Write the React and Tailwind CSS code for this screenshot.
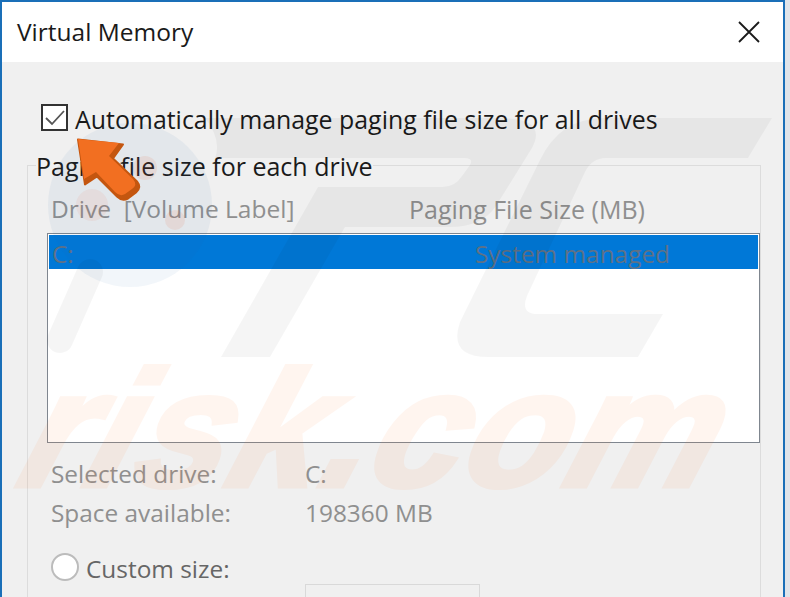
import React from "react";

const Watermark = () => (
  <div className="absolute inset-0 pointer-events-none overflow-hidden">
    <svg className="absolute left-0 top-0" width="790" height="597" viewBox="0 0 790 597" fill="none">
      {/* magnifier */}
      <circle cx="130" cy="205" r="82" fill="#2a5ea8" fillOpacity="0.06" />
      <line x1="90" y1="272" x2="60" y2="340" stroke="#000" strokeOpacity="0.04" strokeWidth="26" strokeLinecap="round" />
      <circle cx="145" cy="168" r="12" fill="#f05a28" fillOpacity="0.1" />
      <circle cx="92" cy="205" r="16" fill="#f05a28" fillOpacity="0.07" />
      <circle cx="175" cy="220" r="10" fill="#f05a28" fillOpacity="0.1" />
      {/* P */}
      <path
        fillRule="evenodd"
        fill="#000"
        fillOpacity="0.04"
        d="M205 118 L500 118 Q548 118 532 148 L496 206 Q482 227 450 227 L345 227 L270 357 L221 357 L318 187 L442 187 Q455 187 462 176 L470 165 Q474 158 464 158 L215 158 Q222 140 205 118 Z"
      />
      {/* C */}
      <path
        fill="#000"
        fillOpacity="0.04"
        d="M772 118 L748 158 L606 158 Q592 158 585 172 L527 296 Q520 314 538 314 L663 314 L638 357 L488 357 Q448 357 460 322 L540 160 Q560 118 604 118 Z"
      />
    </svg>
    <span className="absolute left-0 top-[329px] origin-bottom-left -skew-x-[18deg] font-['Liberation_Sans',sans-serif] font-bold italic text-[165px] leading-[200px] tracking-[2px] whitespace-nowrap text-[#ff7a2a] opacity-[0.07] [-webkit-text-stroke:5px_#ff7a2a]">
      risk.com
    </span>
  </div>
);

const Arrow = () => (
  <svg className="absolute left-[70px] top-[130px]" width="80" height="75" viewBox="70 130 80 75">
    <path
      d="M77 138 L122 143 L112 157 L136 180 Q141 186 135 191 L127 197 Q121 200 116 195 L96 175 L84 183 Z"
      fill="#c4560f"
      stroke="#c4560f"
      strokeWidth="2"
      strokeLinejoin="round"
      transform="translate(1 1.5)"
    />
    <path
      d="M78 139 L119 143 L109 156 L133 179 Q138 185 132 189 L125 194 Q120 197 115 192 L96 172 L84 179 Z"
      fill="#f26f21"
      strokeLinejoin="round"
    />
  </svg>
);

export default function App() {
  return (
    <div className="relative w-[790px] h-[597px] overflow-hidden bg-[#dfe4ea] font-['Open_Sans',sans-serif]">
      <div className="w-[785px] h-[597px] border-l-2 border-r-2 border-t-2 border-[#1a6fb8] bg-[#f0f0f0] flex flex-col">
        <div className="h-[60px] shrink-0 bg-white flex items-center justify-between pl-[15px] pr-[23px]">
          <span className="text-[24.5px] leading-[30px] text-[#1a1a1a]">Virtual Memory</span>
          <svg width="22" height="22" viewBox="0 0 22 22" fill="none" stroke="#1a1a1a" strokeWidth="1.8">
            <path d="M1 1 L21 21 M21 1 L1 21" />
          </svg>
        </div>

        <div className="flex-1 min-h-0">
          <div className="flex items-center gap-[7px] pl-[39px] mt-[42px] h-[27px]">
            <div className="w-[27px] h-[27px] border-2 border-[#333] bg-white flex items-center justify-center">
              <svg width="20" height="16" viewBox="0 0 20 16" fill="none" stroke="#555" strokeWidth="1.8">
                <path d="M1 8 L7 14 L19 1" />
              </svg>
            </div>
            <span className="text-[24.9px] leading-[30px] pt-[2px] text-[#1a1a1a] whitespace-nowrap">
              Automatically manage paging file size for all drives
            </span>
          </div>

          <div className="ml-[25px] mt-[34px] w-[734px] h-[500px] border border-[#dcdcdc]">
            <div className="-mt-[15px] ml-[8px] w-fit bg-[#f0f0f0] h-[30px] text-[25px] leading-[30px] text-[#1a1a1a] whitespace-nowrap">
              Paging file size for each drive
            </div>

            <div className="mt-[13px] h-[30px] flex text-[25px] leading-[30px] text-[#8f8f8f] pl-[23px]">
              <span className="w-[358px] whitespace-pre text-[24.5px]">Drive  [Volume Label]</span>
              <span>Paging File Size (MB)</span>
            </div>

            <div className="mt-[9px] ml-[19px] w-[713px] h-[210px] border border-[#7f868f] bg-white p-px">
              <div className="h-[34px] bg-[#0078d7] flex text-[24.4px] leading-[38px] text-[#5f7186] pl-[3px]">
                <span className="w-[423px]">C:</span>
                <span>System managed</span>
              </div>
            </div>

            <div className="mt-[16px] h-[30px] flex text-[24.4px] leading-[30px] text-[#8f8f8f] pl-[23px]">
              <span className="w-[254px]">Selected drive:</span>
              <span>C:</span>
            </div>
            <div className="mt-[9px] h-[30px] flex text-[24.4px] leading-[30px] text-[#8f8f8f] pl-[23px]">
              <span className="w-[254px]">Space available:</span>
              <span>198360 MB</span>
            </div>

            <div className="mt-[25px] h-[28px] flex items-center gap-[7px] pl-[23px]">
              <div className="w-[28px] h-[28px] rounded-full border-2 border-[#bcbcbc] bg-white" />
              <span className="text-[24.4px] leading-[30px] pt-[4px] text-[#666]">Custom size:</span>
            </div>
            <div className="mt-[3px] ml-[277px] w-[175px] h-[40px] border border-[#d9d9d9]" />
          </div>
        </div>
      </div>

      <Watermark />
      <Arrow />
    </div>
  );
}
